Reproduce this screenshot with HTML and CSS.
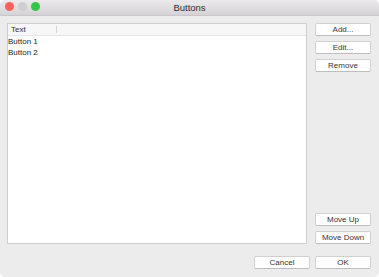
FILE: index.html
```html
<!DOCTYPE html>
<html>
<head>
<meta charset="utf-8">
<link rel="stylesheet" href="styles.css">
</head>
<body>
<div class="window">
  <div class="titlebar">
    <div class="lights">
      <span class="light red"></span>
      <span class="light gray"></span>
      <span class="light green"></span>
    </div>
    <div class="title">Buttons</div>
  </div>
  <div class="content">
    <div class="main">
      <div class="list">
        <div class="header">
          <div class="col">Text</div>
        </div>
        <div class="row">Button 1</div>
        <div class="row">Button 2</div>
      </div>
      <div class="side">
        <div class="group">
          <button class="btn">Add...</button>
          <button class="btn">Edit...</button>
          <button class="btn">Remove</button>
        </div>
        <div class="group">
          <button class="btn">Move Up</button>
          <button class="btn">Move Down</button>
        </div>
      </div>
    </div>
    <div class="footer">
      <button class="btn">Cancel</button>
      <button class="btn">OK</button>
    </div>
  </div>
</div>
</body>
</html>
```

FILE: styles.css
```css
html, body {
  margin: 0;
  padding: 0;
  background: #ffffff;
}
body {
  font-family: "Liberation Sans", Arial, sans-serif;
  font-size: 8px;
  color: #222;
}
.window {
  width: 379px;
  height: 277px;
  background: #ececec;
  border-radius: 5px;
  overflow: hidden;
  display: flex;
  flex-direction: column;
}
.titlebar {
  height: 15px;
  border-bottom: 1px solid #c9c7c9;
  background: linear-gradient(#ebe9eb, #d5d3d5);
  display: flex;
  align-items: center;
  position: relative;
}
.lights {
  display: flex;
  gap: 4px;
  padding-left: 5px;
  position: absolute;
  left: 0;
  top: 2px;
}
.light {
  width: 9px;
  height: 9px;
  border-radius: 50%;
  display: block;
}
.red { background: #fc605c; }
.gray { background: #d0cfd0; }
.green { background: #34c84a; }
.title {
  flex: 1;
  text-align: center;
  font-size: 9.5px;
  color: #2e2e2e;
  line-height: 15px;
}
.content {
  flex: 1;
  display: flex;
  flex-direction: column;
  padding: 7px 8px 8px 7px;
}
.main {
  display: flex;
  gap: 8px;
  height: 221px;
}
.list {
  width: 298px;
  border: 1px solid #cfcfcf;
  background: #ffffff;
  display: flex;
  flex-direction: column;
}
.header {
  height: 11px;
  border-bottom: 1px solid #e4e4e4;
  background: #f7f7f7;
  display: flex;
}
.col {
  width: 45px;
  padding-left: 3px;
  border-right: 1px solid #d6d6d6;
  margin: 2px 0;
  line-height: 8px;
  color: #333;
}
.row {
  height: 11px;
  line-height: 11px;
  padding-left: 0;
  color: #1e1e1e;
}
.side {
  width: 56px;
  display: flex;
  flex-direction: column;
  justify-content: space-between;
}
.group {
  display: flex;
  flex-direction: column;
  gap: 5px;
}
.btn {
  width: 56px;
  height: 13px;
  padding: 0;
  margin: 0;
  font-family: "Liberation Sans", Arial, sans-serif;
  font-size: 8px;
  color: #333;
  background: #ffffff;
  border: 1px solid #d0d0d0;
  border-bottom-color: #bdbdbd;
  border-radius: 2px;
  line-height: 11px;
}
.footer {
  margin-top: 12px;
  display: flex;
  justify-content: flex-end;
  gap: 5px;
}
```
